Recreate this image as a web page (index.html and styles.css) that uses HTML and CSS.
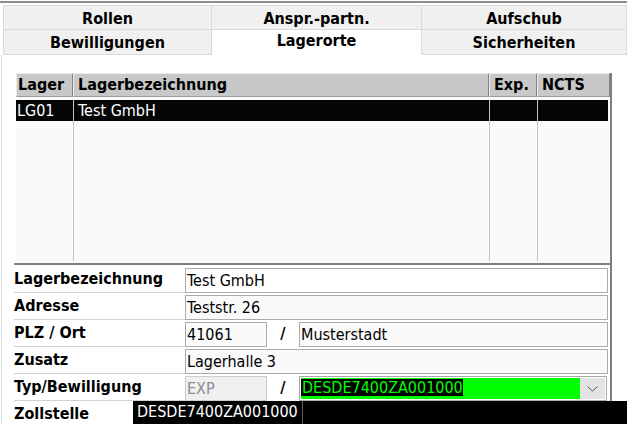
FILE: index.html
```html
<!DOCTYPE html>
<html lang="de">
<head>
<meta charset="utf-8">
<title>Lagerorte</title>
<link rel="stylesheet" href="styles.css">
</head>
<body>
<div class="topbar"></div>
<div class="tabs">
  <div class="tab">Rollen</div>
  <div class="tab">Anspr.-partn.</div>
  <div class="tab">Aufschub</div>
  <div class="tab r2">Bewilligungen</div>
  <div class="tab r2 active">Lagerorte</div>
  <div class="tab r2">Sicherheiten</div>
</div>
<div class="content">
  <div class="panel">
    <div class="list">
      <div class="list-head">
        <div class="th">Lager</div>
        <div class="th">Lagerbezeichnung</div>
        <div class="th">Exp.</div>
        <div class="th">NCTS</div>
      </div>
      <div class="list-body">
        <div class="col c1"><div class="cell sel">LG01</div></div>
        <div class="col c2"><div class="cell sel">Test GmbH</div></div>
        <div class="col c3"><div class="cell sel"></div></div>
        <div class="col c4"><div class="cell sel"></div></div>
      </div>
    </div>
    <div class="form">
      <div class="row">
        <div class="label">Lagerbezeichnung</div>
        <div class="value"><div class="input white">Test GmbH</div></div>
      </div>
      <div class="row">
        <div class="label">Adresse</div>
        <div class="value"><div class="input">Teststr. 26</div></div>
      </div>
      <div class="row">
        <div class="label">PLZ / Ort</div>
        <div class="value">
          <div class="input short">41061</div>
          <div class="slash">/</div>
          <div class="input">Musterstadt</div>
        </div>
      </div>
      <div class="row">
        <div class="label">Zusatz</div>
        <div class="value"><div class="input">Lagerhalle 3</div></div>
      </div>
      <div class="row">
        <div class="label">Typ/Bewilligung</div>
        <div class="value">
          <div class="input short disabled">EXP</div>
          <div class="slash">/</div>
          <div class="combo">
            <div class="combo-text"><span>DESDE7400ZA001000</span></div>
            <div class="combo-btn">
              <svg width="11" height="6" viewBox="0 0 11 6"><path d="M0.5 0.5 L5.5 5 L10.5 0.5" fill="none" stroke="#5a5a5a" stroke-width="1"/></svg>
            </div>
          </div>
        </div>
      </div>
      <div class="row">
        <div class="label">Zollstelle</div>
        <div class="value"></div>
      </div>
    </div>
  </div>
</div>
<div class="popup">
  <div class="popup-item">DESDE7400ZA001000</div>
</div>
</body>
</html>
```
FILE: styles.css
```css
* { box-sizing: border-box; }
html, body { margin: 0; padding: 0; }
body {
  width: 627px;
  height: 424px;
  overflow: hidden;
  position: relative;
  background: #fff;
  color: #000;
  font-family: "DejaVu Sans Condensed", "DejaVu Sans", sans-serif;
  font-size: 16px;
}
.topbar {
  margin-top: 1px;
  height: 2px;
  background: #8c8c8c;
  margin-bottom: 2px;
}
.tabs {
  display: grid;
  grid-template-columns: 208px 210px 1fr;
  margin-left: 3px;
  border-top: 1px solid #dadada;
  border-left: 1px solid #dadada;
}
.tab {
  height: 24px;
  line-height: 25px;
  background: #f0f0f0;
  border-right: 1px solid #dadada;
  border-bottom: 1px solid #dadada;
  font-weight: bold;
  text-align: center;
}
.tab.r2 { height: 25px; line-height: 26px; }
.tab.active {
  background: #fff;
  border-bottom-color: #fff;
  line-height: 22px;
}
.content {
  margin-left: 1px;
  border-left: 1px solid #dcdcdc;
  padding-left: 12px;
  padding-top: 18px;
  height: 370px;
}
.panel {
  width: 598px;
  border-right: 2px solid #7f7f7f;
  height: 360px;
}
.list { margin-left: 2px; }
.list-head {
  display: grid;
  grid-template-columns: 57px 416px 48px 73px;
  height: 24px;
}
.th {
  background: #c8c8c8;
  border: 1px solid;
  border-color: #ececec #838383 #9a9a9a #ececec;
  font-weight: bold;
  padding-left: 1px;
  line-height: 22px;
  white-space: nowrap;
}
.th + .th { padding-left: 4px; }
.list-body {
  display: flex;
  height: 166px;
  background: #fafafa;
  padding-top: 3px;
  padding-bottom: 2px;
}
.col { height: 100%; }
.c1 { width: 57px; }
.c2 { width: 416px; border-left: 1px solid #c4c4c4; }
.c3 { width: 48px; border-left: 1px solid #c4c4c4; }
.c4 { width: 73px; border-left: 1px solid #c4c4c4; }
.cell { height: 21px; line-height: 21px; padding-left: 1px; white-space: nowrap; }
.c2 .cell { padding-left: 4px; }
.cell.sel { background: #050505; color: #fff; }
.c4 .cell { margin-right: 2px; }
.form {
  border-top: 2px solid #7f7f7f;
  padding-top: 1px;
}
.row {
  display: grid;
  grid-template-columns: 171px 1fr;
  height: 27px;
}
.label {
  border-bottom: 1px solid #d2d2d2;
  font-weight: bold;
  line-height: 26px;
  white-space: nowrap;
}
.value {
  display: flex;
  align-items: flex-start;
  padding-top: 2px;
  padding-right: 2px;
}
.input {
  flex: 1;
  height: 25px;
  border: 1px solid #ababab;
  background: #fafafa;
  line-height: 23px;
  padding-left: 1px;
  white-space: nowrap;
}
.input.white { background: #fff; }
.input.short { flex: none; width: 82px; }
.input.disabled {
  background: #f0f0f0;
  border-color: #cdcdcd;
  color: #8d8d8d;
}
.slash {
  width: 32px;
  text-align: center;
  font-weight: bold;
  line-height: 23px;
}
.combo {
  flex: 1;
  height: 25px;
  margin-right: 1px;
  border: 1px solid #a8a8a8;
  padding: 1px;
  background: #fff;
  display: flex;
}
.combo-text { flex: 1; background: #00ff00; }
.combo-text span {
  display: inline-block;
  background: #000;
  color: #00ff00;
  line-height: 17px;
  height: 17px;
  padding-left: 1px;
}
.combo-btn {
  width: 25px;
  background: #e3e3e3;
  display: flex;
  align-items: center;
  justify-content: center;
}
.combo-btn svg { display: block; }
.popup {
  position: absolute;
  left: 133px;
  top: 401px;
  width: 494px;
  height: 23px;
  background: #000;
  display: flex;
}
.popup-item {
  width: 170px;
  border-right: 1px solid #5c5c5c;
  color: #fff;
  padding-left: 4px;
  line-height: 22px;
  white-space: nowrap;
}
```
